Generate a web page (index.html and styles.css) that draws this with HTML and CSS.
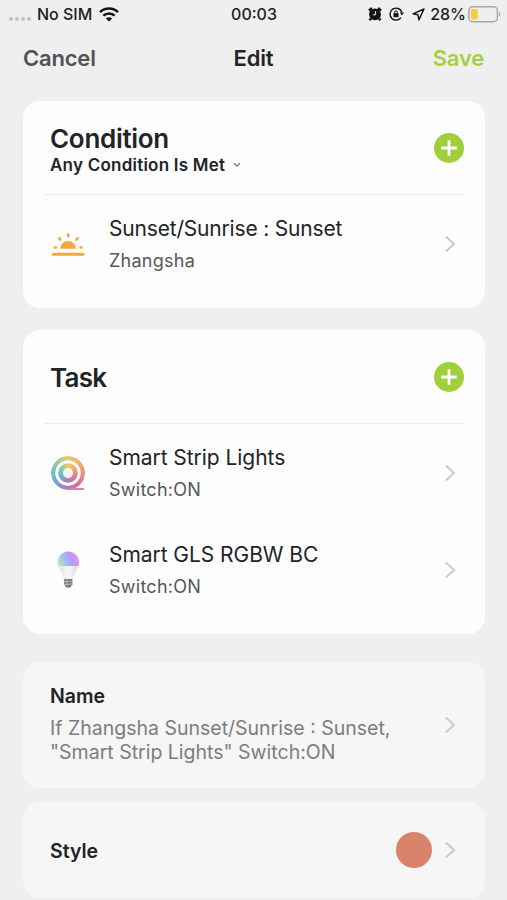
FILE: index.html
```
<!DOCTYPE html>
<html lang="en">
<head>
  <meta charset="UTF-8">
  <meta name="viewport" content="width=device-width, initial-scale=1.0">
  <title>Edit</title>
  <link rel="stylesheet" href="styles.css">
</head>
<body>

  <div class="status-bar">
    <div class="status-left">
      <span class="signal"><i></i><i></i><i></i><i></i></span>
      <span class="carrier">No SIM</span>
      <svg class="wifi" width="20" height="15" viewBox="0 0 20 15" fill="none" stroke="#111" stroke-width="2.5">
        <path d="M1 5.2C6 .4 14 .4 19 5.2"/>
        <path d="M4.3 8.7c3.3-3 8.1-3 11.4 0"/>
        <path d="M10 14.6L6.9 11.5c1.8-1.6 4.4-1.6 6.2 0z" fill="#111" stroke="none"/>
      </svg>
    </div>
    <span class="clock">00:03</span>
    <div class="status-right">
      <svg width="14" height="14" viewBox="0 0 14 14">
        <circle cx="7" cy="7.3" r="5.9" fill="#111"/>
        <path d="M1 3.6L3.9 1M13 3.6L10.1 1M2.8 11.5l-1.2 1.7M11.2 11.5l1.2 1.7" stroke="#111" stroke-width="2.4"/>
        <path d="M7.6 4.2v3.6H4.8" fill="none" stroke="#efefef" stroke-width="1"/>
      </svg>
      <svg class="lock" width="15" height="14" viewBox="0 0 15 14">
        <path d="M12.8 5.2A6 6 0 1 0 12 10.6" fill="none" stroke="#111" stroke-width="1.4"/>
        <path d="M10.8 5.6h4.2l-2.1 3z" fill="#111"/>
        <rect x="4.5" y="6.2" width="5" height="4" fill="#111"/>
        <path d="M5.6 6.4V5.2a1.4 1.4 0 0 1 2.8 0v1.2" fill="none" stroke="#111" stroke-width="1"/>
      </svg>
      <svg class="arrow" width="13" height="13" viewBox="0 0 13 13">
        <path d="M12 1L1 5.8l5 1 .9 5.1z" fill="none" stroke="#111" stroke-width="1.4" stroke-linejoin="round"/>
      </svg>
      <span class="percent">28%</span>
      <svg class="battery" width="33" height="17" viewBox="0 0 33 17">
        <rect x=".8" y=".8" width="28.6" height="14.9" rx="4" fill="none" stroke="#a5a5a5" stroke-width="1.4"/>
        <rect x="2.8" y="3" width="7" height="10.5" rx="1.8" fill="#f6cb45"/>
        <path d="M31 5.8c1.8.9 1.8 4 0 4.9z" fill="#a5a5a5"/>
      </svg>
    </div>
  </div>

  <div class="nav">
    <span class="cancel">Cancel</span>
    <span class="title">Edit</span>
    <span class="save">Save</span>
  </div>

  <div class="card condition">
    <div class="card-head">
      <div>
        <h2>Condition</h2>
        <div class="mode">
          <span>Any Condition Is Met</span>
          <svg width="8" height="6" viewBox="0 0 8 6" fill="none" stroke="#777" stroke-width="1.3"><path d="M1 1.2l3 2.9 3-2.9"/></svg>
        </div>
      </div>
      <svg class="add" width="30" height="30" viewBox="0 0 30 30"><circle cx="15" cy="15" r="15" fill="#9fd03b"/><path d="M15 7.2v15.6M7.2 15h15.6" stroke="#fff" stroke-width="2.8"/></svg>
    </div>
    <div class="row">
      <svg class="icon" width="36" height="36" viewBox="0 0 36 36">
        <path d="M10.3 22.8a7.8 7.8 0 0 1 15.6 0z" fill="#f2a83b"/>
        <path d="M3.3 28.3h29.8" stroke="#f2a83b" stroke-width="3" stroke-linecap="round"/>
        <path d="M18.3 8.2v2M9.1 12.2l1.2 1.5M27.6 12.2l-1.2 1.5M4.7 21.5h1.2M30.4 21.5h1.2" stroke="#f2a83b" stroke-width="2.5" stroke-linecap="round"/>
      </svg>
      <div class="info">
        <div class="name sunset">Sunset/Sunrise : Sunset</div>
        <div class="detail">Zhangsha</div>
      </div>
      <svg class="chevron" width="12" height="18" viewBox="0 0 12 18"><path d="M1.8 1.6L10 9l-8.2 7.4"/></svg>
    </div>
  </div>

  <div class="card task">
    <div class="card-head">
      <h2>Task</h2>
      <svg class="add" width="30" height="30" viewBox="0 0 30 30"><circle cx="15" cy="15" r="15" fill="#9fd03b"/><path d="M15 7.2v15.6M7.2 15h15.6" stroke="#fff" stroke-width="2.8"/></svg>
    </div>
    <div class="row">
      <div class="icon strip">
        <span class="ring outer"></span>
        <span class="ring inner"></span>
        <span class="tail"></span>
      </div>
      <div class="info">
        <div class="name">Smart Strip Lights</div>
        <div class="detail">Switch:ON</div>
      </div>
      <svg class="chevron" width="12" height="18" viewBox="0 0 12 18"><path d="M1.8 1.6L10 9l-8.2 7.4"/></svg>
    </div>
    <div class="row">
      <svg class="icon" width="36" height="40" viewBox="0 0 36 40">
        <defs>
          <linearGradient id="globe" x1="0" y1=".7" x2="1" y2=".4">
            <stop offset="0" stop-color="#b5e8c5"/>
            <stop offset=".3" stop-color="#9fc4ee"/>
            <stop offset=".6" stop-color="#b79cf2"/>
            <stop offset="1" stop-color="#ec8cf0"/>
          </linearGradient>
          <linearGradient id="body">
            <stop offset="0" stop-color="#e2e2e2"/>
            <stop offset=".5" stop-color="#f6f6f6"/>
            <stop offset="1" stop-color="#dcdcdc"/>
          </linearGradient>
        </defs>
        <path d="M8.1 15.5C10 21 13 24 13.9 30h8.8c.9-6 3.9-9 5.8-14.5z" fill="url(#body)"/>
        <path d="M8 16C6.3 8 11 1.6 18.2 1.6S30.4 8 28.7 16z" fill="url(#globe)"/>
        <path d="M14.2 29h8.2v5.2l-2 3.4h-4.2l-2-3.4z" fill="#777"/>
        <path d="M14.2 31.8l8.2-.7M14.2 34.6l8.2-.7M17 29.6v6" stroke="#c9c9c9" stroke-width=".8"/>
      </svg>
      <div class="info">
        <div class="name">Smart GLS RGBW BC</div>
        <div class="detail">Switch:ON</div>
      </div>
      <svg class="chevron" width="12" height="18" viewBox="0 0 12 18"><path d="M1.8 1.6L10 9l-8.2 7.4"/></svg>
    </div>
  </div>

  <div class="card setting name-card">
    <div class="text">
      <h3>Name</h3>
      <p>If Zhangsha Sunset/Sunrise : Sunset,<br>"Smart Strip Lights" Switch:ON</p>
    </div>
    <svg class="chevron" width="12" height="18" viewBox="0 0 12 18"><path d="M1.8 1.6L10 9l-8.2 7.4"/></svg>
  </div>

  <div class="card setting style-card">
    <h3>Style</h3>
    <span class="swatch"></span>
    <svg class="chevron" width="12" height="18" viewBox="0 0 12 18"><path d="M1.8 1.6L10 9l-8.2 7.4"/></svg>
  </div>

</body>
</html>
```
FILE: styles.css
```
* {
  box-sizing: border-box;
}

body {
  font-family: Inter, sans-serif;
  background-color: #efefef;
  color: #222326;
  margin: 0;
  height: 900px;
  overflow: hidden;
}

h2, h3, p {
  margin: 0;
}

svg {
  display: block;
  flex: none;
}

/* Status bar */
.status-bar {
  display: grid;
  grid-template-columns: 1fr auto 1fr;
  align-items: center;
  height: 28px;
  padding: 0 8px 0 9px;
  font-size: 16px;
  font-weight: 500;
  color: #1c1c1c;
}

.status-left, .status-right {
  display: flex;
  align-items: center;
}

.status-right {
  justify-content: flex-end;
  margin-right: -2px;
}

.signal {
  display: flex;
  gap: 2px;
  margin: 9px 6px 0 0;
}

.signal i {
  width: 4px;
  height: 4px;
  border-radius: 50%;
  background-color: #c2c2c2;
}

.wifi {
  margin-left: 7px;
}

.lock {
  margin-left: 7px;
}

.arrow {
  margin-left: 8px;
}

.percent {
  margin-left: 5px;
}

.battery {
  margin-left: 2px;
}

/* Navigation */
.nav {
  display: grid;
  grid-template-columns: 1fr auto 1fr;
  align-items: center;
  height: 60px;
  margin-bottom: 13px;
  padding: 0 23px;
  font-size: 22px;
  font-weight: 600;
  letter-spacing: -0.2px;
}

.cancel {
  color: #505256;
}

.save {
  color: #a4d03c;
  text-align: right;
}

/* Cards */
.card {
  margin: 0 22px 22px 23px;
  border-radius: 17px;
  background-color: #fdfdfd;
}

.condition {
  height: 207px;
}

.task {
  height: 304px;
  margin-bottom: 28px;
}

.card-head {
  display: flex;
  justify-content: space-between;
  align-items: center;
  height: 94px;
  margin: 0 21px;
  padding-left: 6px;
  border-bottom: 1px solid #ececec;
}

h2 {
  font-size: 26px;
  line-height: 30px;
  font-weight: 600;
  letter-spacing: -0.3px;
}

.condition .card-head > div {
  padding-top: 5px;
}

.task h2 {
  padding-top: 2px;
  letter-spacing: -0.7px;
}

.mode {
  display: flex;
  align-items: center;
  gap: 8px;
  font-size: 17px;
  line-height: 22px;
  font-weight: 600;
  letter-spacing: 0.23px;
}

.row {
  display: flex;
  align-items: center;
  height: 97px;
  padding: 0 29px 0 27px;
}

.info {
  flex: 1;
  margin-left: 23px;
  padding-top: 2px;
}

.name {
  font-size: 21px;
  line-height: 33px;
  letter-spacing: -0.05px;
}

.sunset {
  letter-spacing: -0.18px;
}

.detail {
  font-size: 18px;
  line-height: 32px;
  letter-spacing: 0.25px;
  color: #55575a;
}

.chevron {
  fill: none;
  stroke: #c9cacb;
  stroke-width: 2;
}

/* LED strip reel */
.strip {
  position: relative;
  width: 36px;
  height: 36px;
}

.ring {
  position: absolute;
  border-radius: 50%;
  background: conic-gradient(#e8cb68, #f0b66c 12%, #ea8a80 26%, #dd6f9f 38%, #b57bb8 50%, #7f9fd0 62%, #70bfcb 76%, #a5d08c 90%, #e8cb68);
}

.outer {
  inset: 1px;
  mask: radial-gradient(circle, transparent 12.3px, #000 13.1px);
}

.inner {
  inset: 8px;
  mask: radial-gradient(circle, rgba(0, 0, 0, .12) 4.6px, #000 5.6px);
}

.tail {
  position: absolute;
  right: 2px;
  bottom: 1px;
  width: 16px;
  height: 2px;
  background-color: #dc7fac;
}

/* Settings */
.setting {
  display: flex;
  align-items: center;
  margin-bottom: 14px;
  padding: 0 29px 0 27px;
  background-color: #f6f6f6;
}

.name-card {
  height: 126px;
}

.style-card {
  height: 96px;
}

.text, .style-card h3 {
  flex: 1;
}

.text {
  padding-bottom: 3px;
}

h3 {
  font-size: 19.5px;
  line-height: 26px;
  font-weight: 600;
}

.style-card h3 {
  padding-top: 1px;
}

.setting p {
  margin-top: 8px;
  font-size: 19.5px;
  line-height: 23.5px;
  color: #7b7d7f;
}

.swatch {
  width: 36px;
  height: 36px;
  margin-right: 12px;
  border-radius: 50%;
  background-color: #d9836a;
}
```
